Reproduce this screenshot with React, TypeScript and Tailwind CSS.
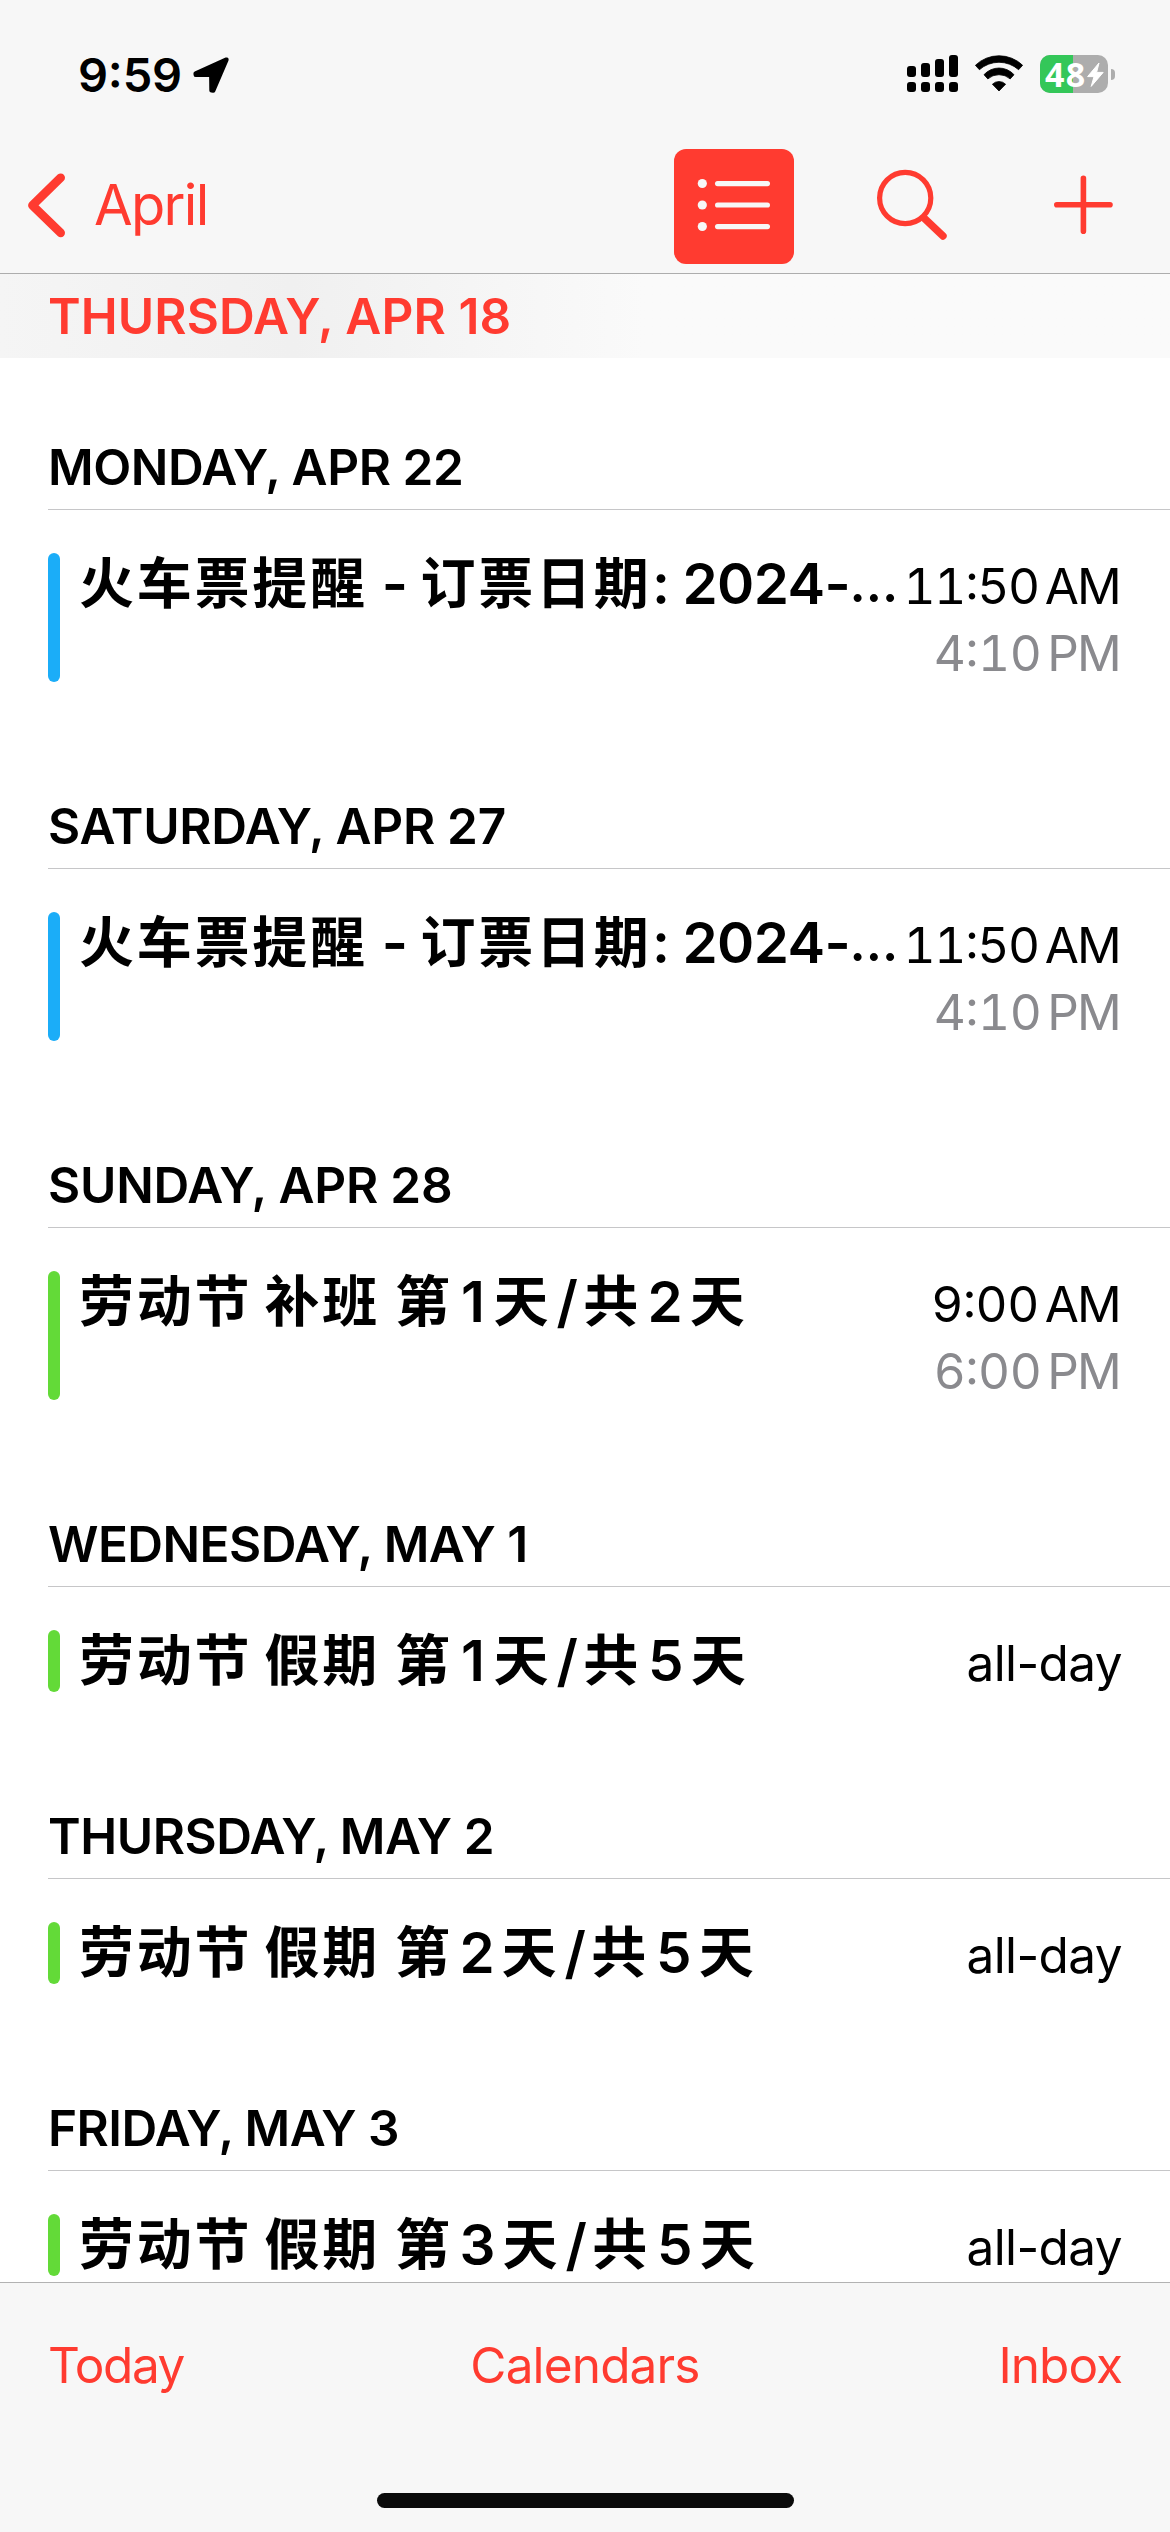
import React from "react";

type Run = { text: string; cls: string };
type Entry = {
  day: string;
  tracking: string;
  color: string;
  title: Run[];
  start?: string;
  startHalf?: string;
  end?: string;
  endHalf?: string;
};

const HAN = "text-[55px] tracking-[2.75px]";
const LATIN = "text-[56.5px] text-center";

const trainTitle: Run[] = [
  { text: "火车票提醒", cls: `${HAN} w-[288.5px]` },
  { text: " - ", cls: `${LATIN} w-[53px]` },
  { text: "订票日期", cls: `${HAN} w-[231.5px]` },
  { text: ": ", cls: "text-[56.5px] w-[30.5px]" },
  { text: "2024-", cls: "text-[56.5px] tracking-[-0.6px] w-[167px]" },
  { text: "…", cls: "text-[51px]" },
];

const DIGIT_WIDTH: Record<string, string> = {
  "1": "w-[41px]",
  "2": "w-[49px]",
  "3": "w-[50px]",
  "5": "w-[50px]",
};

const holidayTitle = (kind: string, n: string, total: string): Run[] => [
  { text: "劳动节", cls: `${HAN} w-[173px]` },
  { text: " ", cls: `${LATIN} w-[12.5px]` },
  { text: kind, cls: `${HAN} w-[115.3px]` },
  { text: " ", cls: `${LATIN} w-[15.2px]` },
  { text: "第", cls: `${HAN} w-[57.5px]` },
  { text: n, cls: `${LATIN} ${DIGIT_WIDTH[n]}` },
  { text: "天", cls: `${HAN} w-[57.7px]` },
  { text: "/", cls: `${LATIN} w-[32px]` },
  { text: "共", cls: `${HAN} w-[57.5px]` },
  { text: total, cls: `${LATIN} ${DIGIT_WIDTH[total]}` },
  { text: "天", cls: HAN },
];

const BLUE = "bg-[#1badf8]";
const GREEN = "bg-[#63da38]";

const entries: Entry[] = [
  { day: "MONDAY, APR 22", tracking: "tracking-[-0.44px]", color: BLUE, title: trainTitle, start: "11:50", startHalf: "AM", end: "4:10", endHalf: "PM" },
  { day: "SATURDAY, APR 27", tracking: "tracking-[-0.3px]", color: BLUE, title: trainTitle, start: "11:50", startHalf: "AM", end: "4:10", endHalf: "PM" },
  { day: "SUNDAY, APR 28", tracking: "tracking-[-0.2px]", color: GREEN, title: holidayTitle("补班", "1", "2"), start: "9:00", startHalf: "AM", end: "6:00", endHalf: "PM" },
  { day: "WEDNESDAY, MAY 1", tracking: "tracking-[-0.55px]", color: GREEN, title: holidayTitle("假期", "1", "5") },
  { day: "THURSDAY, MAY 2", tracking: "tracking-[-0.45px]", color: GREEN, title: holidayTitle("假期", "2", "5") },
  { day: "FRIDAY, MAY 3", tracking: "tracking-[-0.55px]", color: GREEN, title: holidayTitle("假期", "3", "5") },
];

function LocationArrow() {
  return (
    <svg className="ml-[8px] h-[42px] w-[42px]" viewBox="190 54 42 42">
      <path d="M226.5 59.6 195.6 73.4 195.8 74.9H211.3L211.5 90.4 213.2 90.6Z" fill="#000" stroke="#000" strokeWidth="4.4" strokeLinejoin="round" />
    </svg>
  );
}

function CellSignal() {
  return (
    <svg className="h-[40px] w-[52px]" viewBox="907 55 52 40">
      <rect x="907" y="67" width="9" height="11" rx="3" />
      <rect x="921" y="64" width="9" height="14" rx="3" />
      <rect x="935" y="60" width="9" height="18" rx="3" />
      <rect x="949" y="56" width="9" height="22" rx="3" />
      <rect x="907" y="83" width="9" height="10" rx="3" />
      <rect x="921" y="83" width="9" height="10" rx="3" />
      <rect x="935" y="83" width="9" height="10" rx="3" />
      <rect x="949" y="83" width="9" height="10" rx="3" />
    </svg>
  );
}

function Wifi() {
  return (
    <svg className="ml-[15px] h-[40px] w-[50px]" viewBox="974 54 50 40">
      <g stroke="#000" strokeWidth="0.8" strokeLinejoin="round">
        <path d="M975.4 65.3A34 34 0 0 1 1022.6 65.3L1018.6 69.7A29.6 29.6 0 0 0 979.4 69.7Z" />
        <path d="M984 74.7A20.2 20.2 0 0 1 1014 74.7L1010.2 78.9A17 17 0 0 0 987.8 78.9Z" />
        <path d="M992.4 84.2A9.5 9.5 0 0 1 1005.6 84.2L999 91Z" />
      </g>
    </svg>
  );
}

function Battery() {
  return (
    <div className="ml-[16px] flex items-center">
      <div className="relative flex h-[38px] w-[68px] items-center overflow-hidden rounded-[10px] bg-[#adadad]">
        <div className="absolute inset-y-0 left-0 w-[33px] bg-[#34c759]" />
        <span className="relative ml-[5px] font-['Noto_Sans',sans-serif] text-[34px] font-bold leading-[38px] tracking-[1.2px] text-white">48</span>
        <svg className="absolute left-[46px] top-[6px] h-[27px] w-[19px]" viewBox="1086 61 19 27">
          <path d="M1099 63 1087.6 76.6H1094L1091.2 86.4 1103.2 72.4H1096.6Z" fill="#fff" stroke="#fff" strokeWidth="1" strokeLinejoin="round" />
        </svg>
      </div>
      <div className="ml-[3px] h-[11px] w-[4px] rounded-r-full bg-[#adadad]" />
    </div>
  );
}

function StatusBar() {
  return (
    <div className="flex h-[140px] items-start justify-between pl-[78px] pr-[55px]">
      <div className="mt-[54px] flex h-[42px] items-center">
        <span className="text-[47px] font-semibold leading-[42px] tracking-[-0.2px] [font-feature-settings:'case']">9:59</span>
        <LocationArrow />
      </div>
      <div className="mt-[54px] flex h-[40px] items-center">
        <CellSignal />
        <Wifi />
        <Battery />
      </div>
    </div>
  );
}

function NavBar() {
  return (
    <div className="flex h-[134px] items-start border-b border-[#adadad] text-[#ff3b30]">
      <button className="ml-[26px] mt-[31px] flex h-[68px] items-center">
        <svg className="h-[68px] w-[42px]" viewBox="26 171 42 68">
          <path d="M60.7 177.7 32.4 205.3 60.7 232.9" fill="none" stroke="#ff3b30" strokeWidth="8.6" strokeLinecap="round" strokeLinejoin="round" />
        </svg>
        <span className="ml-[26px] text-[56px] leading-[68px] tracking-[-1.7px]">April</span>
      </button>
      <div className="ml-auto mt-[9px] flex">
        <button className="h-[115px] w-[120px] overflow-hidden rounded-[12px] bg-[#ff3b30]">
          <svg className="h-[115px] w-[120px]" viewBox="674 149 120 115" fill="#f7f7f7">
            <circle cx="702.3" cy="183.5" r="4.6" />
            <circle cx="702.3" cy="205" r="4.6" />
            <circle cx="702.3" cy="226.5" r="4.6" />
            <rect x="715" y="181" width="55" height="5.2" rx="2.6" />
            <rect x="715" y="202.4" width="55" height="5.2" rx="2.6" />
            <rect x="715" y="224" width="55" height="5.2" rx="2.6" />
          </svg>
        </button>
        <button className="ml-[80px] mr-[104px]">
          <svg className="h-[115px] w-[76px]" viewBox="874 149 76 115" fill="none" stroke="#ff3b30" strokeLinecap="round">
            <circle cx="905.2" cy="198" r="25.6" strokeWidth="5.2" />
            <path d="M924 218 943 236" strokeWidth="7.4" />
          </svg>
        </button>
        <button className="mr-[54px]">
          <svg className="h-[115px] w-[62px]" viewBox="1054 149 62 115" fill="none" stroke="#ff3b30" strokeWidth="5.6" strokeLinecap="round">
            <path d="M1056.8 204.8H1110M1083.4 178.2V231.3" />
          </svg>
        </button>
      </div>
    </div>
  );
}

function TimeLine({ clock, half, cls }: { clock: string; half: string; cls: string }) {
  return (
    <div className={`flex justify-end ${cls}`}>
      <span className={`[font-feature-settings:'case','tnum'] ${clock.length > 4 ? "tracking-[-1.3px]" : "tracking-[-0.5px]"}`}>{clock}</span>
      <span className="ml-[6px] mr-[2.4px] tracking-[-2px]">{half}</span>
    </div>
  );
}

function DaySection({ entry }: { entry: Entry }) {
  const timed = entry.start !== undefined;
  return (
    <section className="flex flex-col">
      <h2 className={`ml-[48px] h-[85px] border-b border-[#c6c6c8] text-[49.5px] font-semibold leading-[84px] whitespace-nowrap ${entry.tracking}`}>
        {entry.day}
      </h2>
      <div className={`flex pl-[48px] pr-[48px] pt-[43px] ${timed ? "h-[274px]" : "h-[207px]"}`}>
        <div className={`w-[12px] shrink-0 rounded-full ${entry.color} ${timed ? "h-[129px]" : "h-[62px]"}`} />
        <div className="ml-[19px] flex h-[61px] leading-[61px] font-semibold whitespace-pre">
          {entry.title.map((run, i) => (
            <span key={i} className={`block shrink-0 ${run.cls}`}>{run.text}</span>
          ))}
        </div>
        <div className="ml-auto text-[49.5px] leading-[67px] whitespace-nowrap">
          {timed ? (
            <>
              <TimeLine clock={entry.start!} half={entry.startHalf!} cls="text-black" />
              <TimeLine clock={entry.end!} half={entry.endHalf!} cls="text-[#8a8a8e]" />
            </>
          ) : (
            <span className="tracking-[-0.6px]">all-day</span>
          )}
        </div>
      </div>
    </section>
  );
}

export default function App() {
  return (
    <div className="flex h-[2532px] w-[1170px] flex-col overflow-hidden bg-white font-['Inter','Noto_Sans_CJK_SC',sans-serif] text-black">
      <header className="shrink-0 bg-[#f7f7f7]">
        <StatusBar />
        <NavBar />
      </header>
      <div className="h-[84px] shrink-0 bg-linear-to-r from-[#f5f5f5] via-[#f0f0f0] via-25% to-[#fafafa] to-55% pl-[48px] text-[49.5px] font-semibold leading-[84px] tracking-[0.1px] text-[#ff3b30]">
        THURSDAY, APR 18
      </div>
      <main className="min-h-0 flex-1 overflow-hidden pt-[67px]">
        {entries.map((entry) => (
          <DaySection key={entry.day} entry={entry} />
        ))}
      </main>
      <footer className="flex h-[250px] shrink-0 flex-col items-center border-t border-[#b2b2b2] bg-[#f7f7f7]">
        <nav className="mt-[49px] grid h-[66px] w-full grid-cols-3 pl-[48px] pr-[48px] text-[49.5px] leading-[66px] text-[#ff3b30]">
          <span className="text-left tracking-[-1.4px]">Today</span>
          <span className="text-center tracking-[-0.85px]">Calendars</span>
          <span className="text-right tracking-[-1px]">Inbox</span>
        </nav>
        <div className="mt-[95px] h-[15px] w-[417px] rounded-full bg-[#0a0a0a]" />
      </footer>
    </div>
  );
}
